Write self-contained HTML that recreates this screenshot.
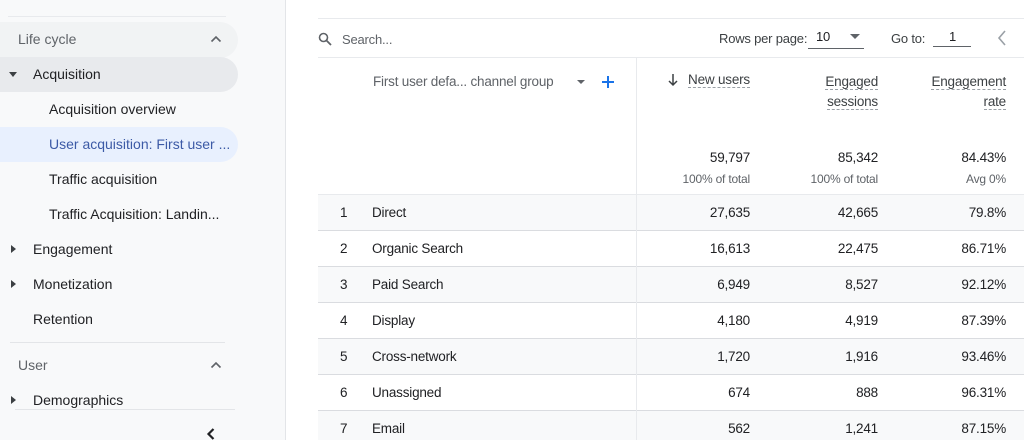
<!DOCTYPE html>
<html><head><meta charset="utf-8"><style>
*{margin:0;padding:0;box-sizing:border-box}
html,body{width:1024px;height:440px;overflow:hidden}
body{background:#fff;font-family:"Liberation Sans",sans-serif;color:#202124;position:relative}
.side{position:absolute;left:0;top:0;width:286px;height:440px;background:#f8f9fa;border-right:1px solid #e3e5e8}
.a{position:absolute;font-size:14px;white-space:nowrap}
.hr{position:absolute;height:1px;background:#dadce0}
.pill{position:absolute;left:0;width:238px;border-radius:0 18px 18px 0}
.main .t{position:absolute;font-size:13px;white-space:nowrap;letter-spacing:-0.2px}
.row{position:absolute;left:318px;width:706px;height:36px;border-bottom:1px solid #dadce0}
.row span{position:absolute;top:10px;font-size:13.5px;letter-spacing:-0.2px}
.r{text-align:right}
.dash{border-bottom:1px dashed #9aa0a6}
svg{position:absolute}
</style></head><body>
<div class="side">
 <div class="hr" style="left:8px;top:16px;width:218px;background:#e8eaed"></div>
 <div class="pill" style="top:22px;height:36px;background:#f1f3f4;left:0"></div>
 <div class="pill" style="top:57px;height:35px;background:#e8eaed"></div>
 <div class="pill" style="top:127px;height:35px;background:#e8f0fe"></div>
 <div class="a" style="left:18px;top:31px;color:#5f6368">Life cycle</div>
 <svg style="left:210px;top:35px" width="12" height="8" viewBox="0 0 12 8"><path d="M1.5 6.5L6 2L10.5 6.5" fill="none" stroke="#5f6368" stroke-width="1.6"/></svg>
 <svg style="left:9px;top:72px" width="8" height="5" viewBox="0 0 8 5"><path d="M0 0H8L4 5Z" fill="#3c4043"/></svg>
 <div class="a" style="left:33px;top:66px">Acquisition</div>
 <div class="a" style="left:49px;top:101px">Acquisition overview</div>
 <div class="a" style="left:49px;top:136px;color:#3c5aa6">User acquisition: First user ...</div>
 <div class="a" style="left:49px;top:171px">Traffic acquisition</div>
 <div class="a" style="left:49px;top:206px">Traffic Acquisition: Landin...</div>
 <svg style="left:11px;top:245px" width="5" height="8" viewBox="0 0 5 8"><path d="M0 0V8L5 4Z" fill="#3c4043"/></svg>
 <div class="a" style="left:33px;top:241px">Engagement</div>
 <svg style="left:11px;top:280px" width="5" height="8" viewBox="0 0 5 8"><path d="M0 0V8L5 4Z" fill="#3c4043"/></svg>
 <div class="a" style="left:33px;top:276px">Monetization</div>
 <div class="a" style="left:33px;top:311px">Retention</div>
 <div class="hr" style="left:10px;top:342px;width:215px;background:#e3e5e8"></div>
 <div class="a" style="left:18px;top:357px;color:#5f6368">User</div>
 <svg style="left:210px;top:361px" width="12" height="8" viewBox="0 0 12 8"><path d="M1.5 6.5L6 2L10.5 6.5" fill="none" stroke="#5f6368" stroke-width="1.6"/></svg>
 <svg style="left:11px;top:396px" width="5" height="8" viewBox="0 0 5 8"><path d="M0 0V8L5 4Z" fill="#3c4043"/></svg>
 <div class="a" style="left:33px;top:392px">Demographics</div>
 <div class="hr" style="left:15px;top:409px;width:220px;background:#e3e5e8"></div>
 <svg style="left:206px;top:428px" width="10" height="12" viewBox="0 0 10 12"><path d="M7.5 1L2.5 6L7.5 11" fill="none" stroke="#202124" stroke-width="2.2"/></svg>
</div>
<div class="main">
 <div class="hr" style="left:318px;top:18px;width:706px;background:#e8eaed"></div>
 <svg style="left:318px;top:32px" width="14" height="14" viewBox="0 0 14 14"><circle cx="5.5" cy="5.5" r="4" fill="none" stroke="#5f6368" stroke-width="1.6"/><path d="M8.5 8.5L13 13" stroke="#5f6368" stroke-width="1.8"/></svg>
 <div class="t" style="left:342px;top:32px;color:#5f6368">Search...</div>
 <div class="t" style="left:719px;top:31px;color:#3c4043">Rows per page:</div>
 <div class="t" style="left:816px;top:29px">10</div>
 <svg style="left:850px;top:34px" width="10" height="5" viewBox="0 0 10 5"><path d="M0 0H10L5 5Z" fill="#5f6368"/></svg>
 <div class="hr" style="left:808px;top:48px;width:56px;background:#5f6368"></div>
 <div class="t" style="left:891px;top:31px;color:#3c4043">Go to:</div>
 <div class="t" style="left:949px;top:29px">1</div>
 <div class="hr" style="left:933px;top:46px;width:38px;background:#5f6368"></div>
 <svg style="left:997px;top:30px" width="10" height="16" viewBox="0 0 10 16"><path d="M8 1L2 8L8 15" fill="none" stroke="#9aa0a6" stroke-width="1.6"/></svg>
 <div class="hr" style="left:318px;top:57px;width:706px;background:#e8eaed"></div>
 <div class="t" style="left:373px;top:74px;color:#5f6368;font-size:13.5px">First user defa... channel group</div>
 <svg style="left:577px;top:80px" width="8" height="4" viewBox="0 0 8 4"><path d="M0 0H8L4 4Z" fill="#5f6368"/></svg>
 <svg style="left:601px;top:75px" width="14" height="14" viewBox="0 0 14 14"><path d="M7 1V13M1 7H13" stroke="#1a73e8" stroke-width="2"/></svg>
 <svg style="left:668px;top:73px" width="10" height="14" viewBox="0 0 10 14"><path d="M5 1V12M1 8L5 12L9 8" fill="none" stroke="#3c4043" stroke-width="1.5"/></svg>
 <div class="t r" style="right:274px;top:72px;color:#3c4043;font-size:13.5px"><span class="dash">New users</span></div>
 <div class="t r" style="right:146px;top:72px;color:#3c4043;font-size:13.5px;line-height:20px"><span class="dash">Engaged</span><br><span class="dash">sessions</span></div>
 <div class="t r" style="right:18px;top:72px;color:#3c4043;font-size:13.5px;line-height:20px"><span class="dash">Engagement</span><br><span class="dash">rate</span></div>
 <div class="t r" style="right:274px;top:150px;font-size:13.5px">59,797</div>
 <div class="t r" style="right:146px;top:150px;font-size:13.5px">85,342</div>
 <div class="t r" style="right:18px;top:150px;font-size:13.5px">84.43%</div>
 <div class="t r" style="right:274px;top:172px;font-size:12px;color:#5f6368">100% of total</div>
 <div class="t r" style="right:146px;top:172px;font-size:12px;color:#5f6368">100% of total</div>
 <div class="t r" style="right:18px;top:172px;font-size:12px;color:#5f6368">Avg 0%</div>
 <div class="hr" style="left:318px;top:194px;width:706px;background:#e8eaed"></div>

 <div class="row" style="top:195px;background:#f8f9fa"><span style="left:22px">1</span><span style="left:54px">Direct</span><span class="r" style="right:274px">27,635</span><span class="r" style="right:146px">42,665</span><span class="r" style="right:18px">79.8%</span></div>
 <div class="row" style="top:231px"><span style="left:22px">2</span><span style="left:54px">Organic Search</span><span class="r" style="right:274px">16,613</span><span class="r" style="right:146px">22,475</span><span class="r" style="right:18px">86.71%</span></div>
 <div class="row" style="top:267px;background:#f8f9fa"><span style="left:22px">3</span><span style="left:54px">Paid Search</span><span class="r" style="right:274px">6,949</span><span class="r" style="right:146px">8,527</span><span class="r" style="right:18px">92.12%</span></div>
 <div class="row" style="top:303px"><span style="left:22px">4</span><span style="left:54px">Display</span><span class="r" style="right:274px">4,180</span><span class="r" style="right:146px">4,919</span><span class="r" style="right:18px">87.39%</span></div>
 <div class="row" style="top:339px;background:#f8f9fa"><span style="left:22px">5</span><span style="left:54px">Cross-network</span><span class="r" style="right:274px">1,720</span><span class="r" style="right:146px">1,916</span><span class="r" style="right:18px">93.46%</span></div>
 <div class="row" style="top:375px"><span style="left:22px">6</span><span style="left:54px">Unassigned</span><span class="r" style="right:274px">674</span><span class="r" style="right:146px">888</span><span class="r" style="right:18px">96.31%</span></div>
 <div class="row" style="top:411px;background:#f8f9fa"><span style="left:22px">7</span><span style="left:54px">Email</span><span class="r" style="right:274px">562</span><span class="r" style="right:146px">1,241</span><span class="r" style="right:18px">87.15%</span></div>
 <div class="hr" style="left:636px;top:58px;width:1px;height:382px;background:#e8eaed"></div>
</div>
</body></html>
